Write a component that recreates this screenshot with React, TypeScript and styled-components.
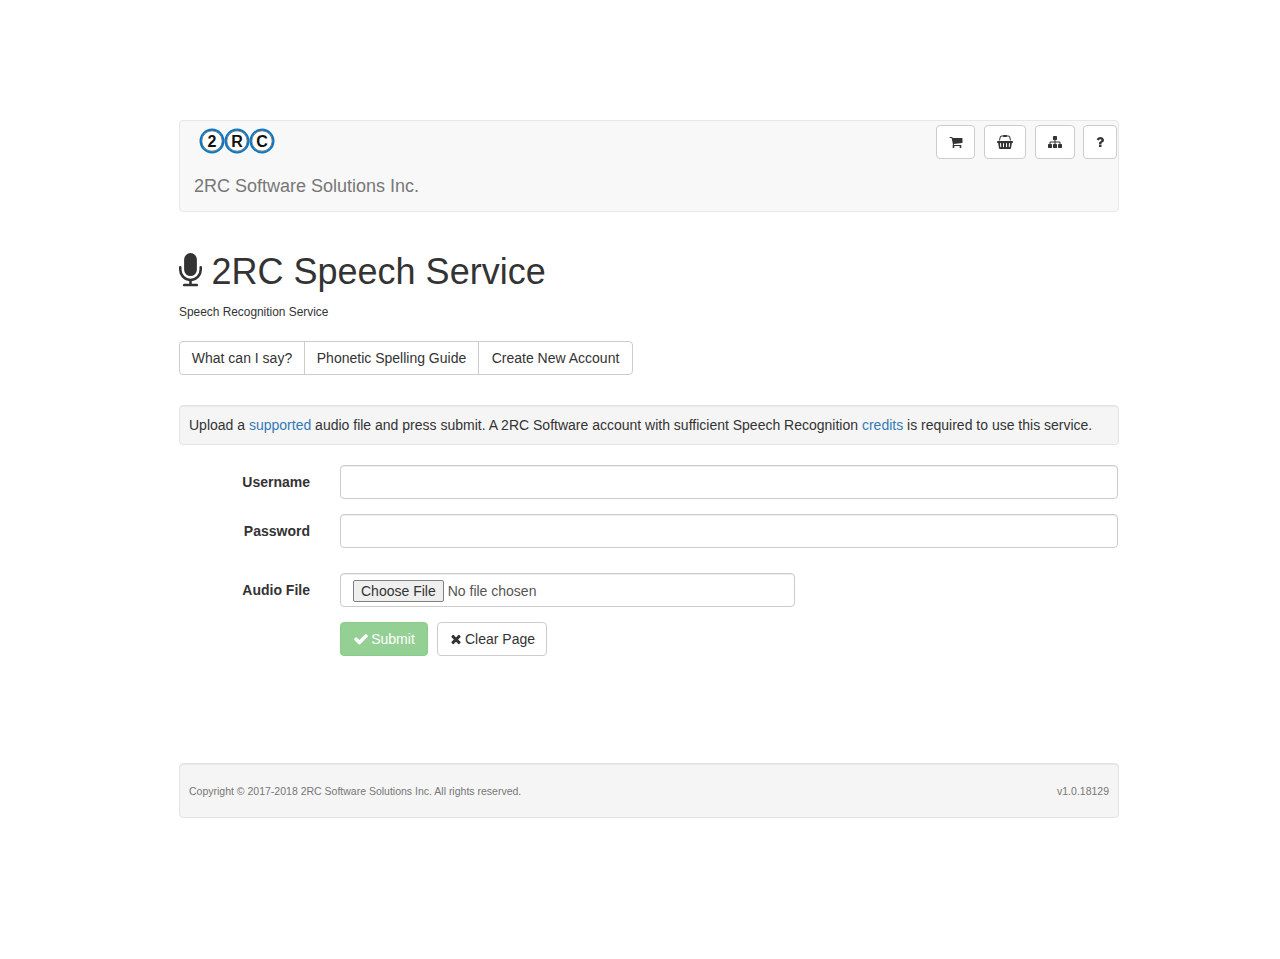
import React from "react";
import styled, { createGlobalStyle } from "styled-components";

const Global = createGlobalStyle`
  html, body { margin: 0; padding: 0; background: #fff; }
  body { font-family: "Liberation Sans", Arial, sans-serif; font-size: 14px; line-height: 20px; color: #333; }
  * { box-sizing: border-box; }
`;

const Page = styled.div`
  width: 940px;
  margin-left: 179px;
  padding-top: 120px;
  padding-bottom: 141px;
`;

const Navbar = styled.nav`
  position: relative;
  height: 92px;
  background: #f8f8f8;
  border: 1px solid #e7e7e7;
  border-radius: 4px;
  padding: 5px 1px 0 14px;
  display: flex;
  justify-content: space-between;
`;

const Brand = styled.div`
  display: flex;
  flex-direction: column;
`;

const Logo = styled.svg`
  display: block;
  margin-left: 5px;
  width: 78px;
  height: 30px;
`;

const BrandName = styled.div`
  margin-top: 20px;
  font-size: 18px;
  line-height: 20px;
  color: #777;
`;

const NavTools = styled.div`
  display: flex;
  gap: 8px;
  margin-top: -1px;
`;

const IconButton = styled.button<{ $w: number; $gap?: number }>`
  width: ${(p) => p.$w}px;
  height: 34px;
  margin-left: ${(p) => p.$gap ?? 0}px;
  background: #fff;
  border: 1px solid #ccc;
  border-radius: 4px;
  padding: 0;
  color: #333;
  display: flex;
  align-items: center;
  justify-content: center;
`;

const Icon = styled.svg<{ $w: number; $h?: number }>`
  display: inline-block;
  width: ${(p) => p.$w}px;
  height: ${(p) => p.$h ?? 14}px;
  fill: currentColor;
  flex: none;
`;

const MicIcon = styled(Icon)`
  margin-top: -2px;
`;

const Heading = styled.h1`
  margin: 40px 0 0;
  font-size: 36px;
  line-height: 40px;
  font-weight: 500;
  color: #333;
  display: flex;
  align-items: center;
  gap: 9.5px;
`;

const Sub = styled.div`
  margin-top: 10px;
  font-size: 11.9px;
  line-height: 20px;
  color: #333;
`;

const Group = styled.div`
  margin-top: 19px;
  display: flex;
`;

const GroupButton = styled.button<{ $w: number }>`
  width: ${(p) => p.$w}px;
  height: 34px;
  padding: 0;
  margin-left: -1px;
  background: #fff;
  border: 1px solid #ccc;
  color: #333;
  font: inherit;
  &:first-child { margin-left: 0; border-radius: 4px 0 0 4px; }
  &:last-child { border-radius: 0 4px 4px 0; }
`;

const Notice = styled.div`
  margin-top: 30px;
  height: 40px;
  padding: 9px;
  background: #f5f5f5;
  border: 1px solid #e3e3e3;
  border-radius: 4px;
  box-shadow: inset 0 1px 1px rgba(0, 0, 0, 0.05);
  white-space: nowrap;
`;

const Link = styled.a`
  color: #337ab7;
  text-decoration: none;
`;

const Form = styled.form`
  margin-top: 20px;
  display: grid;
  grid-template-columns: 131px 1fr;
  column-gap: 30px;
  padding-right: 1px;
`;

const Label = styled.label<{ $mb: number }>`
  text-align: right;
  font-weight: 700;
  padding-top: 7px;
  margin-bottom: ${(p) => p.$mb}px;
`;

const TextInput = styled.input<{ $mb: number }>`
  height: 34px;
  width: 100%;
  padding: 6px 12px;
  margin-bottom: ${(p) => p.$mb}px;
  border: 1px solid #ccc;
  border-radius: 4px;
  background: #fff;
  box-shadow: inset 0 1px 1px rgba(0, 0, 0, 0.075);
  font: inherit;
`;

const FileInput = styled.input`
  display: block;
  height: 34px;
  width: 455px;
  padding: 6px 12px;
  margin-bottom: 15px;
  border: 1px solid #ccc;
  border-radius: 4px;
  background: #fff;
  color: #555;
  font-family: "Liberation Sans", Arial, sans-serif;
  font-size: 14px;
  line-height: 20px;
  box-shadow: inset 0 1px 1px rgba(0, 0, 0, 0.075);
  &::file-selector-button {
    background: #efefef;
    border: 1px solid #808080;
    border-radius: 2px;
    padding: 2px 7px;
    color: #333;
  }
`;

const Actions = styled.div`
  grid-column: 2;
  display: flex;
  gap: 9px;
`;

const SubmitButton = styled.button`
  height: 34px;
  width: 88px;
  padding: 0;
  background: #5cb85c;
  border: 1px solid #4cae4c;
  border-radius: 4px;
  color: #fff;
  opacity: 0.65;
  font: inherit;
  display: flex;
  align-items: center;
  justify-content: center;
  gap: 2px;
`;

const ClearButton = styled.button`
  height: 34px;
  width: 110px;
  padding: 0;
  background: #fff;
  border: 1px solid #ccc;
  border-radius: 4px;
  color: #333;
  font: inherit;
  display: flex;
  align-items: center;
  justify-content: center;
  gap: 2px;
`;

const Footer = styled.footer`
  margin-top: 107px;
  height: 55px;
  padding: 0 9px;
  background: #f5f5f5;
  border: 1px solid #e3e3e3;
  border-radius: 4px;
  box-shadow: inset 0 1px 1px rgba(0, 0, 0, 0.05);
  display: flex;
  align-items: center;
  justify-content: space-between;
  font-size: 10.5px;
  color: #777;
`;

const CHECK = "M1671 566q0 40-28 68l-724 724-136 136q-28 28-68 28t-68-28l-136-136-362-362q-28-28-28-68t28-68l136-136q28-28 68-28t68 28l294 295 656-657q28-28 68-28t68 28l136 136q28 28 28 68z";
const TIMES = "M1490 1322q0 40-28 68l-136 136q-28 28-68 28t-68-28l-294-294-294 294q-28 28-68 28t-68-28l-136-136q-28-28-28-68t28-68l294-294-294-294q-28-28-28-68t28-68l136-136q28-28 68-28t68 28l294 294 294-294q28-28 68-28t68 28l136 136q28 28 28 68t-28 68l-294 294 294 294q28 28 28 68z";
const CART = "M704 1536q0 52-38 90t-90 38-90-38-38-90 38-90 90-38 90 38 38 90zm896 0q0 52-38 90t-90 38-90-38-38-90 38-90 90-38 90 38 38 90zm128-1088v512q0 24-16.500 42.500t-40.500 21.500l-1044 122q13 60 13 70 0 16-24 64h920q26 0 45 19t19 45-19 45-45 19h-1024q-26 0-45-19t-19-45q0-11 8-31.500t16-36 21.500-40 15.500-29.500l-177-823h-204q-26 0-45-19t-19-45 19-45 45-19h256q16 0 28.500 6.500t19.500 15.500 13 24.500 8 26 5.500 29.500 4.500 26h1201q26 0 45 19t19 45z";
const BASKET = "M1920 768q53 0 90.500 37.500t37.500 90.500-37.500 90.500-90.500 37.500h-15l-115 662q-8 46-44 76t-82 30h-1280q-46 0-82-30t-44-76l-115-662h-15q-53 0-90.500-37.500t-37.500-90.500 37.500-90.500 90.500-37.500h1792zm-1435 800q26-2 43.500-22.500t15.500-46.500l-32-416q-2-26-22.500-43.500t-46.500-15.500-43.500 22.500-15.500 46.500l32 416q2 25 20.500 42t43.500 17h5zm411-64v-416q0-26-19-45t-45-19-45 19-19 45v416q0 26 19 45t45 19 45-19 19-45zm384 0v-416q0-26-19-45t-45-19-45 19-19 45v416q0 26 19 45t45 19 45-19 19-45zm352 5l32-416q2-26-15.500-46.500t-43.500-22.500-46.500 15.500-22.500 43.500l-32 416q-2 26 15.500 46.500t43.500 22.500h5q25 0 43.500-17t20.500-42zm-1156-1217l-93 412h-132l101-441q19-88 89-143.500t160-55.500h167q0-26 19-45t45-19h384q26 0 45 19t19 45h167q90 0 160 55.500t89 143.500l101 441h-132l-93-412q-11-44-45.500-72t-79.500-28h-167q0 26-19 45t-45 19h-384q-26 0-45-19t-19-45h-167q-45 0-79.500 28t-45.500 72z";
const SITEMAP = "M1792 1248v320q0 40-28 68t-68 28h-320q-40 0-68-28t-28-68v-320q0-40 28-68t68-28h96v-192h-512v192h96q40 0 68 28t28 68v320q0 40-28 68t-68 28h-320q-40 0-68-28t-28-68v-320q0-40 28-68t68-28h96v-192h-512v192h96q40 0 68 28t28 68v320q0 40-28 68t-68 28h-320q-40 0-68-28t-28-68v-320q0-40 28-68t68-28h96v-192q0-52 38-90t90-38h512v-192h-96q-40 0-68-28t-28-68v-320q0-40 28-68t68-28h320q40 0 68 28t28 68v320q0 40-28 68t-68 28h-96v192h512q52 0 90 38t38 90v192h96q40 0 68 28t28 68z";
const QUESTION = "M704 1256v240q0 16-12 28t-28 12h-240q-16 0-28-12t-12-28v-240q0-16 12-28t28-12h240q16 0 28 12t12 28zm316-600q0 54-15.500 101t-35 76.500-55 59.500-57.500 43.500-61 35.500q-41 23-68.500 65t-27.500 67q0 17-12 32.500t-28 15.500h-240q-15 0-25.500-18.500t-10.500-37.500v-45q0-83 65-156.500t143-108.500q59-27 84-56t25-76q0-42-46.500-74t-107.500-32q-65 0-108 29-35 25-107 115-13 16-31 16-12 0-25-8l-164-125q-13-10-15.500-25t5.500-28q160-266 464-266 80 0 161 31t146 83 106 127.500 41 158.500z";
const MIC = "M1472 704v128q0 221-147.500 384.500t-364.500 187.500v132h256q26 0 45 19t19 45-19 45-45 19h-640q-26 0-45-19t-19-45 19-45 45-19h256v-132q-217-24-364.500-187.500t-147.500-384.500v-128q0-26 19-45t45-19 45 19 19 45v128q0 185 131.500 316.500t316.500 131.500 316.500-131.500 131.500-316.500v-128q0-26 19-45t45-19 45 19 19 45zm-256-384v512q0 132-94 226t-226 94-226-94-94-226v-512q0-132 94-226t226-94 226 94 94 226z";

const LOGO = [
  { cx: 13, ch: "2" },
  { cx: 38, ch: "R" },
  { cx: 63, ch: "C" },
];

export default function App() {
  return (
    <Page>
      <Global />
      <Navbar>
        <Brand>
          <Logo viewBox="0 0 78 30" aria-label="2RC">
            {LOGO.map((l) => (
              <g key={l.ch}>
                <circle cx={l.cx} cy={15} r={11.5} fill="#fff" stroke="#0a78c8" strokeWidth={2} />
                <circle cx={l.cx} cy={15} r={10.2} fill="none" stroke="#222" strokeWidth={0.6} />
                <text x={l.cx} y={20.5} textAnchor="middle" fontFamily="'Liberation Sans', Arial, sans-serif" fontWeight={700} fontSize={16} fill="#111">
                  {l.ch}
                </text>
              </g>
            ))}
          </Logo>
          <BrandName>2RC Software Solutions Inc.</BrandName>
        </Brand>
        <NavTools>
          <IconButton $w={39} type="button">
            <Icon $w={14} viewBox="0 0 1792 1792"><path d={CART} /></Icon>
          </IconButton>
          <IconButton $w={42} $gap={1} type="button">
            <Icon $w={16} viewBox="0 0 2048 1792"><path d={BASKET} /></Icon>
          </IconButton>
          <IconButton $w={40} $gap={1} type="button">
            <Icon $w={14} viewBox="0 0 1792 1792"><path d={SITEMAP} /></Icon>
          </IconButton>
          <IconButton $w={34} type="button">
            <Icon $w={8} viewBox="0 0 1024 1792"><path d={QUESTION} /></Icon>
          </IconButton>
        </NavTools>
      </Navbar>

      <Heading>
        <MicIcon $w={23} $h={36} viewBox="320 0 1152 1792"><path d={MIC} /></MicIcon>
        2RC Speech Service
      </Heading>
      <Sub>Speech Recognition Service</Sub>
      <Group>
        <GroupButton $w={126} type="button">What can I say?</GroupButton>
        <GroupButton $w={175} type="button">Phonetic Spelling Guide</GroupButton>
        <GroupButton $w={155} type="button">Create New Account</GroupButton>
      </Group>

      <Notice>
        Upload a <Link href="#">supported</Link> audio file and press submit. A 2RC Software account with sufficient Speech Recognition <Link href="#">credits</Link> is required to use this service.
      </Notice>

      <Form onSubmit={(e) => e.preventDefault()}>
        <Label $mb={15} htmlFor="user">Username</Label>
        <TextInput $mb={15} id="user" type="text" />
        <Label $mb={25} htmlFor="pass">Password</Label>
        <TextInput $mb={25} id="pass" type="password" />
        <Label $mb={15} htmlFor="audio">Audio File</Label>
        <FileInput id="audio" type="file" />
        <Actions>
          <SubmitButton type="submit" disabled>
            <Icon $w={16} $h={16} viewBox="0 0 1792 1792"><path d={CHECK} /></Icon>
            Submit
          </SubmitButton>
          <ClearButton type="button">
            <Icon $w={14} viewBox="0 0 1792 1792"><path d={TIMES} /></Icon>
            Clear Page
          </ClearButton>
        </Actions>
      </Form>

      <Footer>
        <span>Copyright © 2017-2018 2RC Software Solutions Inc. All rights reserved.</span>
        <span>v1.0.18129</span>
      </Footer>
    </Page>
  );
}
